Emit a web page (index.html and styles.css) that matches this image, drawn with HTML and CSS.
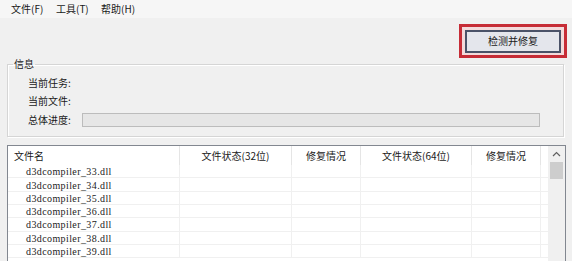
FILE: index.html
```html
<!DOCTYPE html>
<html lang="zh-CN">
<head>
<meta charset="utf-8">
<link rel="stylesheet" href="styles.css">
</head>
<body>
<div class="menubar">
  <span class="menu-item">文件(F)</span>
  <span class="menu-item">工具(T)</span>
  <span class="menu-item">帮助(H)</span>
</div>
<div class="toolbar">
  <div class="highlight">
    <button class="btn">检测并修复</button>
  </div>
</div>
<fieldset class="group">
  <legend class="legend">信息</legend>
  <div class="info-row r1">当前任务:</div>
  <div class="info-row r2">当前文件:</div>
  <div class="info-row r3">总体进度: <div class="progress"></div></div>
</fieldset>
<div class="table">
  <div class="grid">
    <div class="th first">文件名</div>
    <div class="th">文件状态(32位)</div>
    <div class="th">修复情况</div>
    <div class="th">文件状态(64位)</div>
    <div class="th">修复情况</div>
    <div class="th last"></div>

    <div class="td name">d3dcompiler_33.dll</div><div class="td"></div><div class="td"></div><div class="td"></div><div class="td"></div><div class="td last"></div>
    <div class="td name">d3dcompiler_34.dll</div><div class="td"></div><div class="td"></div><div class="td"></div><div class="td"></div><div class="td last"></div>
    <div class="td name">d3dcompiler_35.dll</div><div class="td"></div><div class="td"></div><div class="td"></div><div class="td"></div><div class="td last"></div>
    <div class="td name">d3dcompiler_36.dll</div><div class="td"></div><div class="td"></div><div class="td"></div><div class="td"></div><div class="td last"></div>
    <div class="td name">d3dcompiler_37.dll</div><div class="td"></div><div class="td"></div><div class="td"></div><div class="td"></div><div class="td last"></div>
    <div class="td name">d3dcompiler_38.dll</div><div class="td"></div><div class="td"></div><div class="td"></div><div class="td"></div><div class="td last"></div>
    <div class="td name">d3dcompiler_39.dll</div><div class="td"></div><div class="td"></div><div class="td"></div><div class="td"></div><div class="td last"></div>
  </div>
  <div class="scrollbar">
    <div class="arrow">
      <svg width="9" height="6" viewBox="0 0 9 6"><path d="M1 5 L4.5 1.5 L8 5" fill="none" stroke="#606060" stroke-width="1.2"/></svg>
    </div>
    <div class="thumb"></div>
  </div>
</div>
</body>
</html>
```

FILE: styles.css
```css
html, body {
  margin: 0;
  padding: 0;
}
body {
  width: 572px;
  height: 261px;
  overflow: hidden;
  background: #f0f0f0;
  font-family: "Noto Sans CJK SC", "Microsoft YaHei", sans-serif;
  font-size: 10px;
  color: #1a1a1a;
}
.menubar {
  height: 18px;
  display: flex;
  align-items: center;
  padding-left: 11px;
  background: #f6f6f6;
}
.menu-item {
  width: 45px;
  line-height: 12px;
}
.toolbar {
  display: flex;
  justify-content: flex-end;
  padding: 6px 5px 0 0;
  height: 34px;
}
.highlight {
  width: 102px;
  height: 28px;
  border: 3px solid #c62c36;
  background: #f3dadb;
  display: flex;
  align-items: center;
  justify-content: center;
}
.btn {
  width: 96px;
  height: 23px;
  border: 2px solid #4a5268;
  background: #e4e6ec;
  font-family: "Noto Sans CJK SC", sans-serif;
  font-size: 10px;
  color: #1a1a1a;
  padding: 0;
  line-height: 12px;
}
.group {
  margin: 0 8px 0 7px;
  padding: 3px 0 6px 0;
  border: 1px solid #d5d5d5;
  box-shadow: inset 1px 1px 0 #fff, 1px 1px 0 #fff;
  min-width: 0;
}
.legend {
  margin-left: 5px;
  padding: 0 1px;
  line-height: 12px;
}
.info-row {
  display: flex;
  align-items: center;
  padding-left: 20px;
  height: 18px;
}
.info-row.r3 {
  height: 21px;
}
.progress {
  width: 456px;
  height: 12px;
  margin-left: 11px;
  border: 1px solid #bcbcbc;
  background: #e6e6e6;
}
.table {
  margin: 8px 6px 0 7px;
  border: 1px solid #828790;
  background: #fff;
  display: flex;
  height: 140px;
  overflow: hidden;
}
.grid {
  flex: 1;
  display: grid;
  grid-template-columns: 172px 112px 69px 111px 69px 1fr;
  grid-auto-rows: 13.33px;
  grid-template-rows: 19px;
  align-content: start;
}
.th {
  display: flex;
  align-items: center;
  justify-content: center;
  border-right: 1px solid #e5e5e5;
  line-height: 12px;
}
.th.first {
  justify-content: flex-start;
  padding-left: 6px;
}
.th.last, .td.last {
  border-right: none;
}
.td {
  border-right: 1px solid #f0f0f0;
  border-bottom: 1px solid #f0f0f0;
  box-sizing: border-box;
}
.td.name {
  display: flex;
  align-items: center;
  padding-top: 2px;
  font-family: "Liberation Serif", serif;
  font-size: 10px;
  letter-spacing: 0.4px;
  line-height: 12px;
  padding-left: 18px;
  color: #222;
  white-space: nowrap;
}
.scrollbar {
  width: 17px;
  background: #f0f0f0;
  display: flex;
  flex-direction: column;
  align-items: center;
}
.arrow {
  height: 16px;
  display: flex;
  align-items: center;
  justify-content: center;
}
.thumb {
  width: 13px;
  height: 17px;
  background: #cdcdcd;
}
```
